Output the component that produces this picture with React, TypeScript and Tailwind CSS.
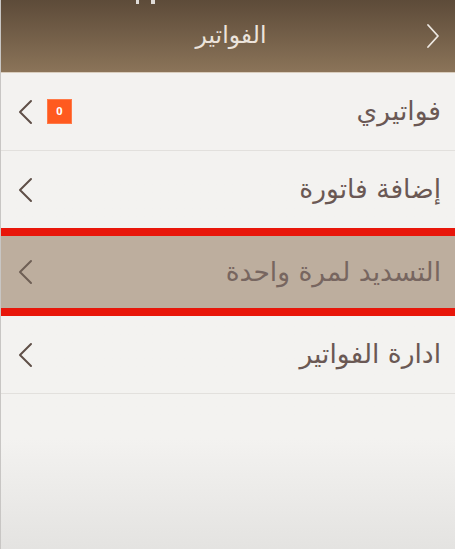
import React from "react";

const font = { fontFamily: '"DejaVu Sans", "Noto Sans", sans-serif' };

function ChevronLeft({ color = "#5f4f48" }: { color?: string }) {
  return (
    <svg width="16" height="26" viewBox="0 0 16 26" fill="none">
      <path d="M14 2 L3 13 L14 24" stroke={color} strokeWidth="2" strokeLinecap="round" strokeLinejoin="round" />
    </svg>
  );
}

function Row({ label, badge, highlight }: { label: string; badge?: string; highlight?: boolean }) {
  return (
    <div
      className={`flex items-center justify-between pl-[16px] pr-[14px] ${
        highlight ? "h-[72px] bg-[#bdae9e]" : "h-[78px] border-b border-[#e2e0dd]"
      }`}
    >
      <div className="flex items-center gap-[14px]">
        <ChevronLeft color={highlight ? "#6e5f55" : "#5f4f48"} />
        {badge !== undefined && (
          <div className="w-[25px] h-[25px] bg-[#ff5a1f] flex items-center justify-center text-white text-[11px] font-bold border border-[#ff7a48]">
            {badge}
          </div>
        )}
      </div>
      <div dir="rtl" className={`text-[26.5px] leading-none ${highlight ? "text-[#776660]" : "text-[#6a5854]"}`} style={font}>
        {label}
      </div>
    </div>
  );
}

export default function App() {
  return (
    <div className="w-[455px] h-[549px] flex flex-col bg-gradient-to-b from-[#f3f2f0] from-80% to-[#e4e3e1] border-l border-[#c8c6c4] overflow-hidden relative">
      <div className="h-[73px] shrink-0 bg-gradient-to-b from-[#5d4b39] to-[#8b7459] border-b border-[#d9cdbd] flex items-center justify-between pl-[16px] pr-[14px] relative">
        <div className="absolute left-[135px] top-0 w-[3px] h-[4px] bg-white/80" />
        <div className="absolute left-[150px] top-0 w-[4px] h-[4px] bg-white/80" />
        <div className="w-[16px]" />
        <div className="text-[23.5px] text-[#ece4dc] leading-none pl-[4px]" style={font}>
          الفواتير
        </div>
        <svg width="16" height="26" viewBox="0 0 16 26" fill="none">
          <path d="M3 2 L13 13 L3 24" stroke="#ede8e2" strokeWidth="1.8" strokeLinecap="round" strokeLinejoin="round" />
        </svg>
      </div>
      <Row label="فواتيري" badge="0" />
      <Row label="إضافة فاتورة" />
      <div className="h-[8px] bg-[#e8160a] -mt-px" />
      <Row label="التسديد لمرة واحدة" highlight />
      <div className="h-[8px] bg-[#e8160a]" />
      <Row label="ادارة الفواتير" />
    </div>
  );
}
